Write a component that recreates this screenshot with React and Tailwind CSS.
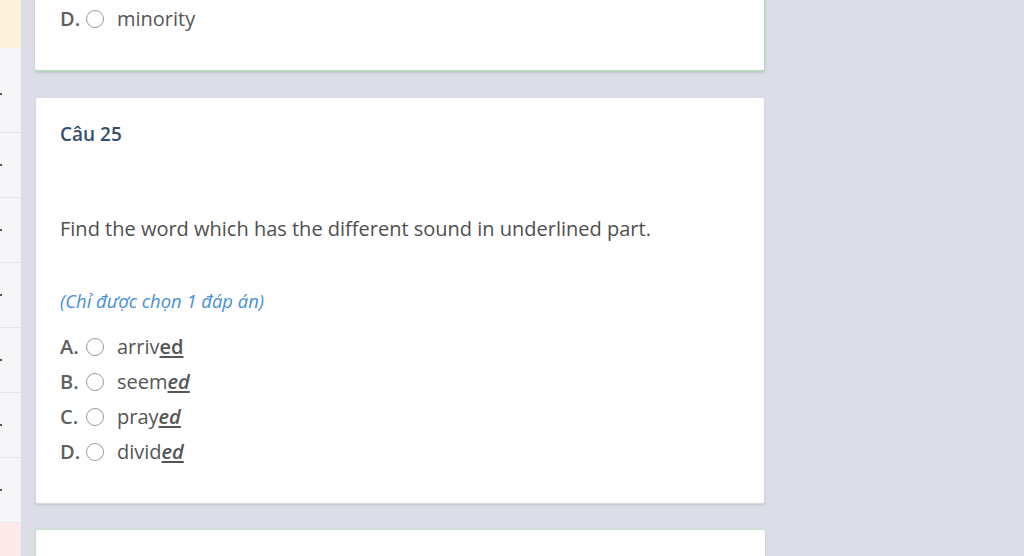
import React from "react"

const font = { fontFamily: '"Open Sans", "Noto Sans", sans-serif' }

const options = [
	{ key: "A", stem: "arriv", tail: "ed", italic: false },
	{ key: "B", stem: "seem", tail: "ed", italic: true },
	{ key: "C", stem: "pray", tail: "ed", italic: true },
	{ key: "D", stem: "divid", tail: "ed", italic: true },
]

function Option({ letter, children }) {
	return (
		<div className="flex items-center h-[35px] text-[20px] text-[#555]">
			<span className="w-[26px] font-semibold text-[#606060]">{letter}.</span>
			<span className="w-[18px] h-[18px] rounded-full border border-[#9a9a9a] bg-white"></span>
			<span className="ml-[13px]">{children}</span>
		</div>
	)
}

function SideStrip() {
	// hàng danh sách câu hỏi bên trái
	const rows = [0, 1, 2, 3, 4, 5]
	return (
		<div className="w-[21px] shrink-0 bg-[#f6f6f9] flex flex-col">
			<div className="h-[48px] shrink-0 bg-[#fcf2da]"></div>
			<div className="h-[85px] shrink-0 border-b border-[#e6e6ea] flex items-center pt-[8px]">
				<span className="w-[2px] h-[2px] bg-[#555]"></span>
			</div>
			{rows.map((r) => (
				<div key={r} className="h-[65px] shrink-0 border-b border-[#e6e6ea] flex items-center">
					<span className="w-[2px] h-[2px] bg-[#555]"></span>
				</div>
			))}
			<div className="flex-1 bg-[#fde9e9]"></div>
		</div>
	)
}

export default function App() {
	return (
		<div className="w-[1024px] h-[556px] overflow-hidden bg-[#dcdde6] flex" style={font}>
			<SideStrip />
			<div className="ml-[14px] w-[730px] flex flex-col gap-[25px]">
				<div className="h-[72px] shrink-0 bg-white rounded-b-[3px] border-r border-b-2 border-[#b3d8bd] shadow-sm flex flex-col justify-end pl-[25px] pb-[34px]">
					<div className="flex items-center h-[35px] text-[20px] text-[#555]">
						<span className="w-[26px] font-semibold text-[#606060]">D.</span>
						<span className="w-[18px] h-[18px] rounded-full border border-[#9a9a9a]"></span>
						<span className="ml-[13px]">minority</span>
					</div>
				</div>

				<div className="h-[407px] shrink-0 bg-white rounded-[3px] border border-[#d9dbe3] shadow-sm px-[24px] pt-[21px]">
					<div className="text-[19px] font-semibold text-[#33506b] leading-[30px]">Câu 25</div>
					<div className="mt-[65px] text-[20px] text-[#4f4f4f] leading-[30px]">
						Find the word which has the different sound in underlined part.
					</div>
					<div className="mt-[44px] text-[18.4px] italic text-[#4a8fd6] leading-[26px]">
						(Chỉ được chọn 1 đáp án)
					</div>
					<div className="mt-[15px] flex flex-col">
						{options.map((o) => (
							<Option key={o.key} letter={o.key}>
								{o.stem}
								<span
									className={
										o.italic
											? "font-semibold italic underline underline-offset-2"
											: "font-semibold underline underline-offset-2"
									}
								>
									{o.tail}
								</span>
							</Option>
						))}
					</div>
				</div>

				<div className="h-[60px] shrink-0 bg-white rounded-t-[3px] border-l border-t border-[#c8e2d0] shadow-sm"></div>
			</div>
		</div>
	)
}
